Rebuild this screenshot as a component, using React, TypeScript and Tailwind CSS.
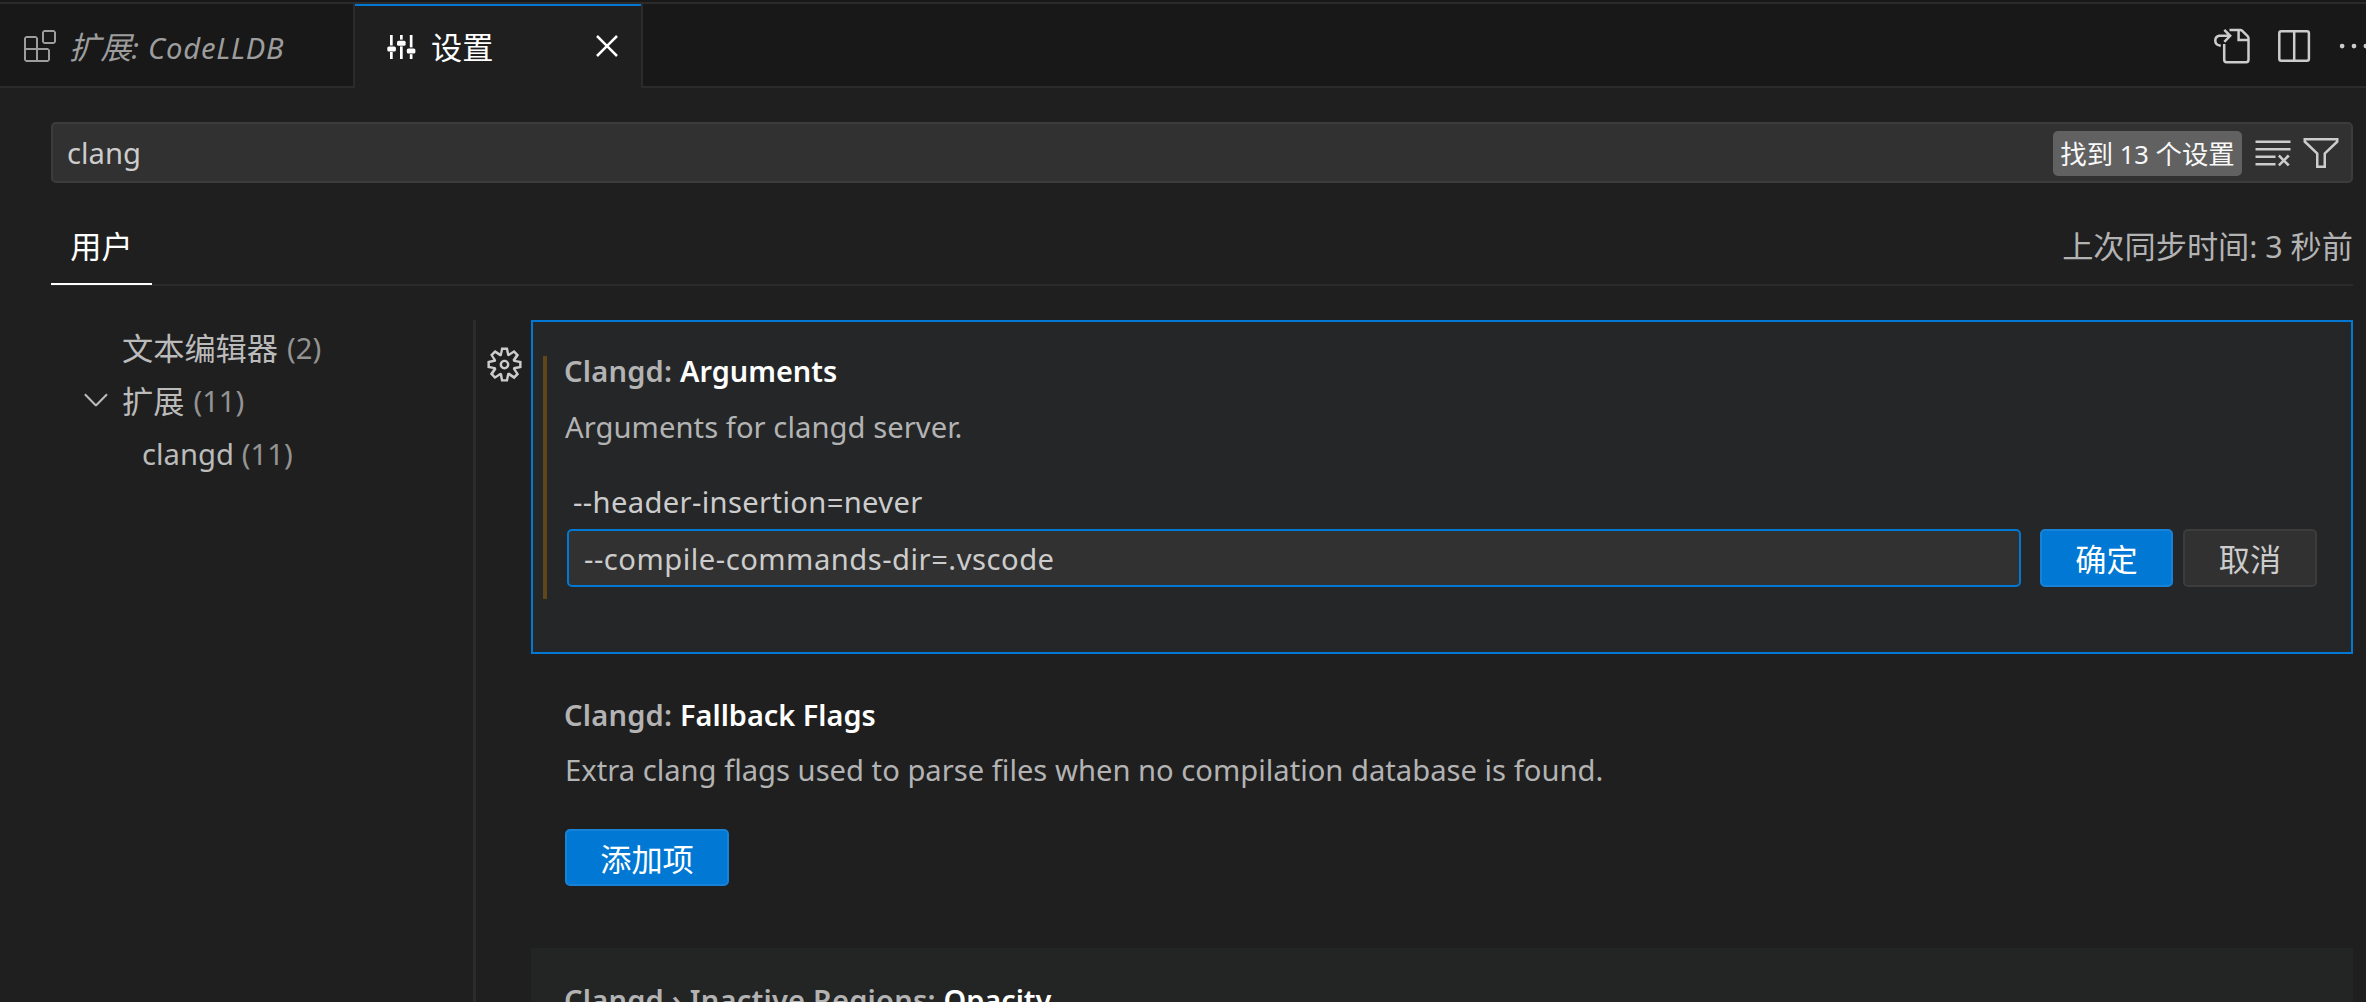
import React from "react";
import {
  VscExtensions,
  VscClose,
  VscEllipsis,
  VscClearAll,
  VscFilter,
  VscGear,
  VscChevronDown,
} from "react-icons/vsc";

function SlidersIcon() {
  return (
    <svg viewBox="0 0 30 26" className="h-[26px] w-[30px]" fill="currentColor">
      <rect x="3" y="1" width="2.7" height="10.5" />
      <rect x="3" y="18" width="2.7" height="7" />
      <rect x="0.3" y="12.5" width="8.6" height="4.9" rx="1.5" />
      <rect x="13" y="1" width="2.7" height="4.6" />
      <rect x="13" y="12.4" width="2.7" height="12.6" />
      <rect x="10" y="6.8" width="8.6" height="4.9" rx="1.5" />
      <rect x="22.8" y="1" width="2.7" height="12.4" />
      <rect x="22.8" y="20.2" width="2.7" height="4.8" />
      <rect x="19.8" y="14.6" width="8.6" height="4.9" rx="1.5" />
    </svg>
  );
}

function GoToFileIcon() {
  return (
    <svg viewBox="0 0 40 40" className="size-[40px]" fill="none" stroke="currentColor" strokeWidth="2.5">
      <path d="M14.2 18V33.8Q14.2 36.2 16.6 36.2H36.2Q38.5 36.2 38.5 33.8V12.2Q38.5 11 37.6 10.1L32.3 4.9Q31.4 4 30.2 4H19.5" />
      <path d="M28.6 4V14H38.5" />
      <path d="M14.3 3.8L20.2 9.8L14.3 15.8M19.8 9.8H9.2A4.9 4.9 0 0 0 9.2 19.4H10.8" />
    </svg>
  );
}

function SplitIcon() {
  return (
    <svg viewBox="0 0 40 40" className="size-[40px]" fill="none" stroke="currentColor" strokeWidth="2.5">
      <rect x="5.3" y="5.2" width="29.6" height="29.6" rx="2" />
      <path d="M20.2 5V35" />
    </svg>
  );
}

function Title({ category, name }: { category: string; name: string }) {
  return (
    <h3 className="-ml-px h-[42px] text-[29.1px] leading-[42px] font-semibold text-[#b3b3b3]">
      <span className="tracking-[0.2px]">{category}: </span>
      <span className="text-[28.9px] text-white">{name}</span>
    </h3>
  );
}

export default function App() {
  return (
    <div className="flex h-[1002px] w-[2366px] flex-col overflow-hidden whitespace-nowrap bg-[#1f1f1f] text-[29.2px] text-[#cccccc] [font-family:'Noto_Sans','Noto_Sans_CJK_SC',sans-serif]">
      <header className="flex h-[88px] shrink-0 flex-col bg-[#181818]">
        <div className="mt-[2px] h-[2px] bg-[#2b2b2b]" />
        <div className="flex flex-1">
          <div className="flex w-[355px] items-center border-r-2 border-b-2 border-[#2b2b2b] pl-[24px] text-[#9d9d9d]">
            <VscExtensions className="mt-px size-[32px]" />
            <span className="ml-[13px] pt-[4px] tracking-[0.8px] italic">
              <span className="text-[31.2px] tracking-normal">扩展</span>: CodeLLDB
            </span>
          </div>
          <div className="flex w-[286px] items-center border-t-2 border-[#0078d4] bg-[#1f1f1f] pl-[32px] text-white">
            <SlidersIcon />
            <span className="ml-[14px] pt-px text-[31.2px]">设置</span>
            <VscClose className="-mt-[2px] ml-[94px] size-[40px]" />
          </div>
          <div className="flex flex-1 items-center justify-end border-b-2 border-l-2 border-[#2b2b2b] pt-px">
            <div className="mr-[24px]"><GoToFileIcon /></div>
            <div className="mr-[21px]"><SplitIcon /></div>
            <VscEllipsis className="-mr-[7px] size-[38px] shrink-0" />
          </div>
        </div>
      </header>

      <div className="mt-[34px] mr-[13px] ml-[51px] flex h-[61px] shrink-0 items-center rounded-[5px] border-2 border-[#3c3c3c] bg-[#313131] pl-[14px]">
        <span className="flex-1 pt-[3px]">clang</span>
        <span className="mt-[2px] mr-[11px] flex h-[45px] w-[189px] items-center justify-center rounded-[5px] bg-[#616161] pt-[2px] text-[25.5px] text-[#f8f8f8]">
          <span><span className="text-[26.4px]">找到</span> 13 <span className="text-[26.4px]">个设置</span></span>
        </span>
        <VscClearAll className="mr-[8px] size-[40px]" />
        <VscFilter className="mr-[10px] size-[40px]" />
      </div>

      <div className="mr-[13px] ml-[51px] flex h-[103px] shrink-0 justify-between border-b-2 border-[#2b2b2b] text-[31.2px]">
        <div className="flex h-[102px] w-[101px] items-end justify-center border-b-2 border-white pb-[13px] text-white">用户</div>
        <div className="flex items-end pb-[14px] text-[#b3b3b3]">
          <span>上次同步时间<span className="text-[30.4px]">: 3 </span>秒前</span>
        </div>
      </div>

      <main className="mt-[34px] flex flex-1">
        <nav className="w-[473px] pt-[2px] leading-[53px] text-[#bbbbbb]">
          <div className="flex h-[53px] pl-[122px]">
            <span className="text-[31.2px]">文本编辑器</span>
            <span className="ml-[9px] text-[#939393]">(2)</span>
          </div>
          <div className="flex h-[53px] items-center pl-[77px]">
            <VscChevronDown className="-mt-[5px] mr-[7px] size-[38px]" />
            <span className="text-[31.2px]">扩展</span>
            <span className="ml-[9px] text-[#939393]">(11)</span>
          </div>
          <div className="flex h-[53px] pl-[142px]">
            <span>clangd</span>
            <span className="ml-[8px] text-[#939393]">(11)</span>
          </div>
        </nav>
        <div className="w-[3px] bg-[#2b2b2b]" />
        <div className="w-[55px] pt-[25px] pl-[9px]">
          <VscGear className="size-[39px]" />
        </div>
        <div className="mr-[13px] flex-1">
          <section className="flex h-[334px] border-2 border-[#0078d4] bg-[#252628] pt-[34px] pl-[10px]">
            <div className="h-[243px] w-[4px] bg-[#5f4718]" />
            <div className="ml-[18px] flex-1 pr-[34px]">
              <div className="-mt-[6px]"><Title category="Clangd" name="Arguments" /></div>
              <p className="mt-[14px] h-[42px] leading-[42px] tracking-[0.05px] text-[#b3b3b3]">Arguments for clangd server.</p>
              <p className="mt-[33px] ml-[8px] h-[42px] leading-[42px] tracking-[0.35px]">--header-insertion=never</p>
              <div className="mt-[6px] ml-[2px] flex h-[58px]">
                <div className="mr-[19px] flex flex-1 items-center rounded-[5px] border-2 border-[#0078d4] bg-[#313131] pt-[4px] pl-[15px] tracking-[0.5px]">
                  --compile-commands-dir=.vscode
                </div>
                <button className="mr-[10px] w-[133px] rounded-[5px] border-2 border-[#1683d8] bg-[#0078d4] pt-[4px] text-[31.2px] leading-none text-white">确定</button>
                <button className="w-[134px] rounded-[5px] border-2 border-[#3c3c3c] bg-[#313131] pt-[4px] text-[31.2px] leading-none">取消</button>
              </div>
            </div>
          </section>
          <section className="h-[294px] pt-[40px] pl-[34px]">
            <Title category="Clangd" name="Fallback Flags" />
            <p className="mt-[13px] h-[42px] leading-[42px] text-[#b3b3b3]">
              Extra clang flags used to parse files when no compilation database is found.
            </p>
            <button className="mt-[38px] h-[57px] w-[164px] rounded-[5px] border-2 border-[#1683d8] bg-[#0078d4] pt-[4px] text-[31.2px] leading-none text-white">添加项</button>
          </section>
          <section className="h-[54px] overflow-hidden bg-[#232424] pt-[31px] pl-[34px]">
            <Title category="Clangd › Inactive Regions" name="Opacity" />
          </section>
        </div>
      </main>
    </div>
  );
}
